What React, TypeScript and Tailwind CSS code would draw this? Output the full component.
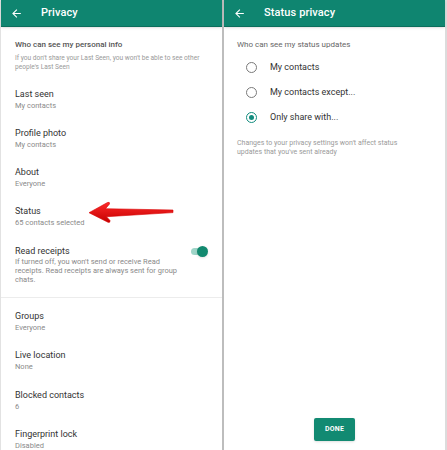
import React from 'react';

const font = { fontFamily: 'Roboto, "Liberation Sans", sans-serif' };

function BackArrow() {
    return (
        <svg width="13" height="13" viewBox="0 0 24 24" fill="white">
            <path d="M20 11H7.83l5.59-5.59L12 4l-8 8 8 8 1.41-1.41L7.83 13H20v-2z" />
        </svg>
    );
}

function Header({ title }: { title: string }) {
    return (
        <div className="h-[27px] shrink-0 bg-[#0f8570] border-b border-[#0b6e5c] flex items-center pl-[9px] shadow-sm">
            <BackArrow />
            <span className="ml-[18px] text-[11px] font-medium text-white tracking-[0.1px]">{title}</span>
        </div>
    );
}

function Row({ title, sub }: { title: string; sub: string }) {
    return (
        <div className="h-[39.3px] shrink-0 pt-[5px] px-[14px]">
            <div className="text-[9px] leading-[11px] text-[#333]">{title}</div>
            <div className="text-[7.5px] leading-[11px] text-[#8a8a8a]">{sub}</div>
        </div>
    );
}

function Radio({ label, checked }: { label: string; checked?: boolean }) {
    return (
        <div className="h-[25px] flex items-center pl-[22px]">
            <div
                className={`w-[11px] h-[11px] rounded-full border-[1.5px] flex items-center justify-center ${
                    checked ? 'border-[#128c7e]' : 'border-[#7a7a7a]'
                }`}
            >
                {checked && <div className="w-[5px] h-[5px] rounded-full bg-[#128c7e]" />}
            </div>
            <span className="ml-[13px] text-[9px] text-[#333]">{label}</span>
        </div>
    );
}

function RedArrow() {
    return (
        <svg className="absolute left-[84px] top-[196px]" width="94" height="32" viewBox="0 0 94 32">
            <defs>
                <linearGradient id="red" x1="0" y1="0" x2="0" y2="1">
                    <stop offset="0" stopColor="#ff2a2a" />
                    <stop offset="1" stopColor="#c40000" />
                </linearGradient>
            </defs>
            <path
                d="M4 16.7 L22.5 6.5 Q25 5.5 24.5 8 L20.5 12.7 L88 14 L88 16.6 L21.5 20.7 L25 24.5 Q25.5 27 23 26.3 Z"
                fill="url(#red)"
                stroke="#d80000"
                strokeWidth="0.6"
                strokeLinejoin="round"
            />
        </svg>
    );
}

export default function App() {
    return (
        <div className="w-[447px] h-[450px] overflow-hidden bg-white flex" style={font}>
            {/* Left screen */}
            <div className="relative w-[224px] shrink-0 flex flex-col border-l border-[#e2e2e2] border-r-2 border-r-[#bdbdbd]">
                <Header title="Privacy" />
                <div className="h-[56.5px] shrink-0 pt-[13px] px-[14px]">
                    <div className="text-[8px] leading-[10px] font-medium text-[#555]">Who can see my personal info</div>
                    <div className="mt-[3.5px] text-[6.6px] leading-[9px] text-[#999]">
                        If you don't share your Last Seen, you won't be able to see other people's Last Seen
                    </div>
                </div>
                <Row title="Last seen" sub="My contacts" />
                <Row title="Profile photo" sub="My contacts" />
                <Row title="About" sub="Everyone" />
                <Row title="Status" sub="65 contacts selected" />
                <div className="h-[56px] shrink-0 pt-[5px] pl-[14px] pr-[14px] flex items-start justify-between">
                    <div className="w-[172px]">
                        <div className="text-[9px] leading-[11px] text-[#333]">Read receipts</div>
                        <div className="text-[7.5px] leading-[9px] text-[#8a8a8a]">
                            If turned off, you won't send or receive Read receipts. Read receipts are always sent for group chats.
                        </div>
                    </div>
                    <div className="relative w-[17px] h-[11px] flex items-center">
                        <div className="w-[15px] h-[7px] rounded-full bg-[#9fd5c8]" />
                        <div className="absolute right-0 w-[11px] h-[11px] rounded-full bg-[#12896f] shadow-sm" />
                    </div>
                </div>
                <div className="h-px shrink-0 bg-[#ececec]" />
                <div className="pt-[8.5px] shrink-0">
                    <Row title="Groups" sub="Everyone" />
                    <Row title="Live location" sub="None" />
                    <Row title="Blocked contacts" sub="6" />
                    <Row title="Fingerprint lock" sub="Disabled" />
                </div>
                <RedArrow />
            </div>

            {/* Right screen */}
            <div className="flex-1 flex flex-col border-r-2 border-[#dcdcdc]">
                <Header title="Status privacy" />
                <div className="pt-[13px] pl-[13px] text-[8px] leading-[10px] text-[#666]">Who can see my status updates</div>
                <div className="mt-[5px]">
                    <Radio label="My contacts" />
                    <Radio label="My contacts except..." />
                    <Radio label="Only share with..." checked />
                </div>
                <div className="mt-[9px] pl-[13px] w-[198px] text-[7px] leading-[9px] text-[#9a9a9a]">
                    Changes to your privacy settings won't affect status updates that you've sent already
                </div>
                <div className="flex-1" />
                <div className="flex justify-center pb-[9px]">
                    <div className="w-[41px] h-[23px] rounded-[2px] bg-[#128a72] shadow-sm flex items-center justify-center text-[7px] font-bold text-white tracking-[0.2px]">
                        DONE
                    </div>
                </div>
            </div>
        </div>
    );
}
